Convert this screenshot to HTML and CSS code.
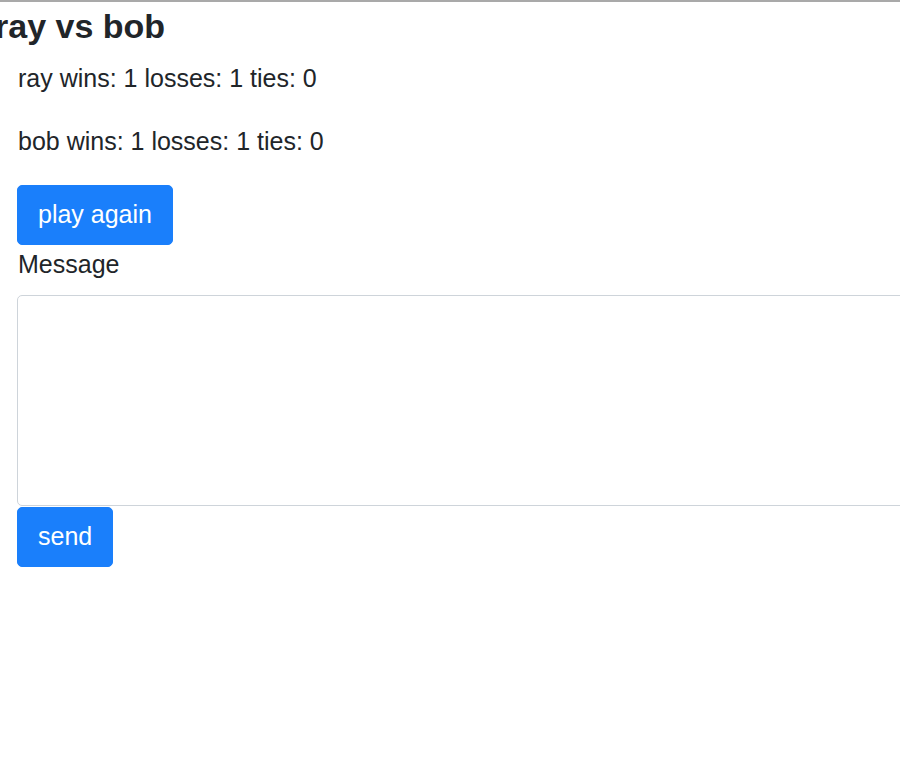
FILE: index.html
```html
<!DOCTYPE html>
<html lang="en">
<head>
<meta charset="utf-8">
<title>ray vs bob</title>
<link rel="stylesheet" href="styles.css">
</head>
<body>
<div class="page">
  <h2 class="title">ray vs bob</h2>
  <p class="score first">ray wins: 1 losses: 1 ties: 0</p>
  <p class="score">bob wins: 1 losses: 1 ties: 0</p>
  <button class="btn btn-play" type="button">play again</button>
  <label class="label" for="msg">Message</label>
  <textarea id="msg" class="message"></textarea>
  <button class="btn" type="button">send</button>
</div>
</body>
</html>
```
FILE: styles.css
```css
html, body {
  margin: 0;
  padding: 0;
  background: #fff;
}
body {
  border-top: 2px solid #a9a9a9;
  font-family: "Liberation Sans", Arial, Helvetica, sans-serif;
  color: #212529;
  overflow: hidden;
}
.page {
  display: flex;
  flex-direction: column;
  align-items: flex-start;
  padding-left: 17px;
  overflow: hidden;
}
.title {
  font-size: 34px;
  font-weight: bold;
  line-height: 1.2;
  margin: 4px 0 0 -22px;
}
.score {
  font-size: 25px;
  line-height: 1.5;
  margin: 26px 0 0 1px;
}
.score.first {
  margin-top: 13px;
}
.btn {
  font-family: "Liberation Sans", Arial, Helvetica, sans-serif;
  font-size: 25px;
  line-height: 1.5;
  color: #fff;
  background: #1a7ffb;
  border: 1px solid #1a7ffb;
  border-radius: 5px;
  padding: 10.5px 20px;
  margin: 0;
  cursor: pointer;
}
.btn-play {
  margin-top: 24px;
}
.label {
  font-size: 25px;
  line-height: 1.5;
  margin: 1px 0 11px 1px;
}
.message {
  display: block;
  box-sizing: border-box;
  width: 920px;
  height: 211px;
  margin: 0 0 1px 0;
  border: 1px solid #ced4da;
  border-radius: 5px;
  resize: none;
  font-family: "Liberation Sans", Arial, sans-serif;
  font-size: 25px;
}
```
